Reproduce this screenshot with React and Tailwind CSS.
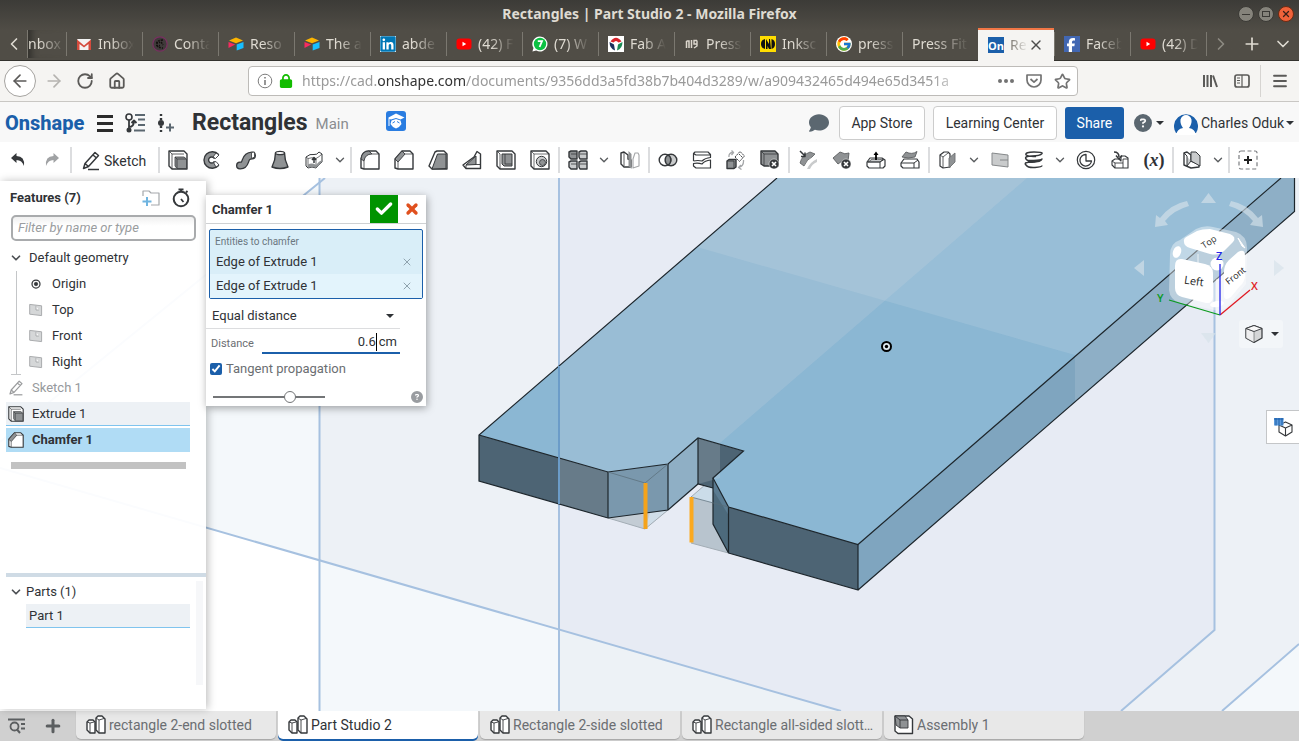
import { useState } from 'react';
import { ArrowLeft, ArrowRight, RotateCw, House, Check, X, Plus, ChevronDown, ChevronLeft, ChevronRight, Star, Menu } from 'lucide-react';
import { FcGoogle } from 'react-icons/fc';
import { FaLock, FaCircleQuestion, FaComment, FaLinkedin, FaFacebookF } from 'react-icons/fa6';

const DARK = '#35383b';

function Icon({ children, className = 'size-5' }) {
  return (
    <svg viewBox="0 0 20 20" className={className} fill="none" stroke={DARK} strokeWidth="1.4" strokeLinejoin="round" aria-hidden="true">
      {children}
    </svg>
  );
}

function Caret({ className = '' }) {
  return (
    <svg viewBox="0 0 8 4" className={`h-1 w-2 shrink-0 ${className}`} aria-hidden="true">
      <path d="M0 0H8L4 4Z" fill="#2f3236" />
    </svg>
  );
}

/* ---------- favicons ---------- */

const YoutubeFav = () => (
  <svg viewBox="0 0 16 16" className="size-4">
    <rect x="0.5" y="2.5" width="15" height="11" rx="3" fill="#f00" />
    <path d="M6.5 5.8V10.2L10.2 8Z" fill="#fff" />
  </svg>
);

const GmailFav = () => (
  <svg viewBox="0 0 16 16" className="size-4">
    <rect x="1" y="3" width="14" height="11" rx="1" fill="#f3f3f3" />
    <path d="M1 14V3.5L8 9.5L15 3.5V14H12.5V8L8 11.5L3.5 8V14Z" fill="#d54b3d" />
  </svg>
);

const SwirlFav = () => (
  <svg viewBox="0 0 16 16" className="size-4">
    <circle cx="8" cy="8" r="7.2" fill="#3f3a3a" stroke="#7a2f62" strokeWidth="1.2" />
    <path d="M11 4Q5 4 5 8T11 12M4 6.5H8M4 9.5H8M9 6L11 9" fill="none" stroke="#15110f" strokeWidth="1.6" strokeDasharray="2 1" />
  </svg>
);

const AirtableFav = () => (
  <svg viewBox="0 0 16 16" className="size-4">
    <path d="M1 4.5L8 1.5L15 4.5L8 7.2Z" fill="#fcb400" />
    <path d="M8.7 8.4L15.5 6V12L8.7 14.5Z" fill="#18bfff" />
    <path d="M0.5 6L7.2 8.6L0.5 12Z" fill="#f82b60" />
  </svg>
);

const WhatsappFav = () => (
  <svg viewBox="0 0 16 16" className="size-4">
    <path d="M8 0.5A7.5 7.5 0 1 1 4.2 14.5L0.4 15.6L1.5 12A7.5 7.5 0 0 1 8 0.5Z" fill="#fff" />
    <circle cx="8" cy="8" r="6.2" fill="#0cc143" />
    <path d="M5.8 5.2H10L7.6 11" fill="none" stroke="#fff" strokeWidth="1.8" />
  </svg>
);

const FabFav = () => (
  <svg viewBox="0 0 16 16" className="size-4">
    <rect width="16" height="16" fill="#fff" />
    <path d="M2.500 5.500Q8 -2 13.500 5.500L10.500 6.500Q8 3.500 5.500 6.500Z" fill="#d8232a" />
    <path d="M1.500 6L6 8.500L7 14.500Q1.500 12.500 1.500 6Z" fill="#1c2f5c" />
    <path d="M14.500 6L10 8.500L9 14.500Q14.500 12.500 14.500 6Z" fill="#1b8a55" />
    <circle cx="8" cy="3.500" r="1.500" fill="#d8232a" />
  </svg>
);

const PressFav = () => (
  <svg viewBox="0 0 16 16" className="size-4">
    <path d="M2.500 12V5M5 12V5H2.500M7.500 4V12" fill="none" stroke="#ddd8cf" strokeWidth="1.5" />
    <path d="M13 4.500H10V8H13V4.500V10L10 12" fill="none" stroke="#ddd8cf" strokeWidth="1.4" />
  </svg>
);

const MakerFav = () => (
  <svg viewBox="0 0 16 16" className="size-4">
    <rect width="16" height="16" fill="#fd0" />
    <path d="M5 3V13Q1 12 1 8T5 3Z" fill="#111" />
    <path d="M6 3L9 8V3H10L11 13H9L7.500 10V13H6Z" fill="#111" />
    <path d="M11.500 3Q15 4 15 8T11.500 13Z" fill="#111" />
  </svg>
);

const OnFav = () => (
  <span className="flex size-4 items-end justify-center bg-[#1b5faa] font-['Open_Sans',sans-serif] text-[11px] leading-[14px] font-bold text-white">On</span>
);

const LinkedinFav = () => (
  <span className="flex size-4 items-center justify-center bg-white"><FaLinkedin className="size-4 scale-110 text-[#0177b5]" /></span>
);

const FacebookFav = () => (
  <span className="flex size-4 items-end justify-end bg-[#4267b2] pr-0.5"><FaFacebookF className="size-3.5 text-white" /></span>
);

const browserTabs = [
  { label: 'Inbox', icon: <GmailFav /> },
  { label: 'Conta', icon: <SwirlFav /> },
  { label: 'Reso', icon: <AirtableFav /> },
  { label: 'The a', icon: <AirtableFav /> },
  { label: 'abde', icon: <LinkedinFav /> },
  { label: '(42) F', icon: <YoutubeFav /> },
  { label: '(7) W', icon: <WhatsappFav /> },
  { label: 'Fab A', icon: <FabFav /> },
  { label: 'Press', icon: <PressFav /> },
  { label: 'Inksc', icon: <MakerFav /> },
  { label: 'press', icon: <FcGoogle className="size-4 rounded-full bg-white" /> },
  { label: 'Press Fit' },
  { label: 'Re', icon: <OnFav />, active: true },
  { label: 'Faceb', icon: <FacebookFav /> },
  { label: '(42) D', icon: <YoutubeFav /> },
];

function BrowserTab({ tab }) {
  if (tab.active) {
    return (
      <button role="tab" aria-selected="true" className="flex h-[33px] w-[76px] shrink-0 items-center border-t-2 border-[#f07746] bg-[#f5f4f2] pl-[10px]">
        {tab.icon}
        <span className="ml-1.5 w-[18px] overflow-hidden text-left text-[#77736c] [mask-image:linear-gradient(to_right,#000,transparent)]">{tab.label}</span>
        <X className="size-4 text-[#4d4d4d]" />
      </button>
    );
  }
  return (
    <button role="tab" aria-selected="false" className="flex h-6 w-[76px] shrink-0 items-center gap-1.5 border-l border-[#7b7870] pr-2 pl-[9px]">
      {tab.icon}
      <span className="flex-1 overflow-hidden text-left whitespace-nowrap [mask-image:linear-gradient(to_right,#000_35%,transparent)]">{tab.label}</span>
    </button>
  );
}

function BrowserChrome() {
  return (
    <header className="font-['Noto_Sans',sans-serif] text-sm">
      <div className="bg-gradient-to-b from-[#3c3b37] to-[#504d46] to-50% text-[#dfdbd2]">
        <div className="flex h-7 items-center">
          <div className="w-16" />
          <h1 className="flex-1 text-center font-bold">Rectangles | Part Studio 2 - Mozilla Firefox</h1>
          <div className="flex w-16 justify-end gap-1 pr-[5px]">
            <button aria-label="Minimize" className="flex size-4 items-center justify-center rounded-full border border-[#3a3935] bg-[#85837b]">
              <span className="h-px w-2 bg-[#3a3935]" />
            </button>
            <button aria-label="Maximize" className="flex size-4 items-center justify-center rounded-full border border-[#3a3935] bg-[#85837b]">
              <span className="h-1.5 w-2 border border-[#3a3935]" />
            </button>
            <button aria-label="Close window" className="flex size-4 items-center justify-center rounded-full border border-[#6b2a12] bg-[#f0623a]">
              <X className="size-2.5 text-[#3a2019]" strokeWidth={3} />
            </button>
          </div>
        </div>
        <div role="tablist" className="flex h-[33px] items-center border-b border-[#33322e]">
          <button aria-label="Scroll tabs left" className="flex w-[27px] shrink-0 justify-center"><ChevronLeft className="size-5" /></button>
          <button role="tab" aria-selected="false" className="h-7 w-[39px] shrink-0 overflow-hidden border-l border-[#7b7870] text-left shadow-[inset_8px_0_6px_-4px_#33322e] [mask-image:linear-gradient(to_right,#000_30%,transparent)]">
            nbox
          </button>
          {browserTabs.map((tab, i) => <BrowserTab key={i} tab={tab} />)}
          <span className="h-6 w-px bg-[#7b7870]" />
          <div className="flex flex-1 items-center justify-between pr-1.5 pl-1">
            <button aria-label="Scroll tabs right"><ChevronRight className="size-5 text-[#8d8a82]" /></button>
            <button aria-label="New tab"><Plus className="size-5" /></button>
            <button aria-label="List all tabs"><ChevronDown className="size-5" /></button>
          </div>
        </div>
      </div>

      {/* Navigation bar */}
      <div className="flex h-[41px] items-center border-b border-[#c9c7c4] bg-[#f5f4f2] text-[#5b5a58]">
        <div className="flex w-[248px] shrink-0 items-center gap-3 pl-1">
          <button aria-label="Back" className="flex size-8 items-center justify-center rounded-full border border-[#a5a3a0] bg-white"><ArrowLeft className="size-5" /></button>
          <button aria-label="Forward" className="-ml-1"><ArrowRight className="size-5 text-[#b5b3b0]" /></button>
          <button aria-label="Reload"><RotateCw className="size-[18px]" strokeWidth={2.4} /></button>
          <button aria-label="Home" className="ml-0.5"><House className="size-[18px]" strokeWidth={2.4} /></button>
        </div>
        <div className="flex h-[30px] min-w-0 flex-1 items-center rounded border border-[#bdbbb8] bg-white pr-1.5 pl-2">
          <svg viewBox="0 0 16 16" className="size-4 shrink-0" fill="none" stroke="#7d7d7d"><circle cx="8" cy="8" r="6.8" /><path d="M8 7V12M8 4V5.6" strokeWidth="1.6" /></svg>
          <FaLock className="mx-1.5 size-3.5 shrink-0 text-[#12bc00]" />
          <div role="textbox" aria-label="Address" className="mr-8 ml-[3px] flex-1 overflow-hidden whitespace-nowrap text-[#9a9a9a] [mask-image:linear-gradient(to_right,#000_95%,transparent)]">
            https://cad.<span className="text-[#333]">onshape.com</span>/documents/9356dd3a5fd38b7b404d3289/w/a909432465d494e65d3451a
          </div>
          <button aria-label="Page actions" className="flex gap-0.5">
            <span className="size-1 rounded-full bg-[#737373]" />
            <span className="size-1 rounded-full bg-[#737373]" />
            <span className="size-1 rounded-full bg-[#737373]" />
          </button>
          <button aria-label="Save to Pocket" className="ml-3">
            <svg viewBox="0 0 16 16" className="size-4" fill="none" stroke="#737373" strokeWidth="1.7" strokeLinejoin="round"><path d="M1 2H15V7A7 7 0 0 1 1 7ZM4.5 6L8 9.2L11.5 6" /></svg>
          </button>
          <button aria-label="Bookmark" className="ml-3"><Star className="size-[17px] text-[#737373]" strokeWidth={2.4} /></button>
        </div>
        <div className="flex w-[221px] shrink-0 items-center justify-end pr-2.5">
          <button aria-label="Library">
            <svg viewBox="0 0 16 16" className="size-4" stroke="#5b5a58" strokeWidth="2"><path d="M2 2V14M5.5 2V14M9 2V14M11 2.5L15 14" /></svg>
          </button>
          <button aria-label="Sidebars" className="ml-4">
            <svg viewBox="0 0 16 16" className="size-4" fill="none" stroke="#5b5a58" strokeWidth="1.7"><rect x="1" y="2" width="14" height="12" rx="2" /><path d="M8 2V14M3 5H6M3 7.5H6M3 10H6" strokeWidth="1.2" /></svg>
          </button>
          <span className="mx-2.5 h-8 w-px bg-[#d6d4d1]" />
          <button aria-label="Open menu"><Menu className="size-[18px]" strokeWidth={2.4} /></button>
        </div>
      </div>
    </header>
  );
}

function AppHeader() {
  return (
    <div className="flex h-10 items-center bg-[#f8f8f8] px-[5px] pt-0.5 text-sm text-[#2f3236]">
      <a href="#home" className="w-[79px] text-xl leading-8 font-extrabold text-[#1b5faa]">Onshape</a>
      <button aria-label="Document menu" className="ml-[13px] flex w-4 flex-col gap-1">
        <span className="h-[3px] bg-[#2b2b2b]" />
        <span className="h-[3px] bg-[#2b2b2b]" />
        <span className="h-[3px] bg-[#2b2b2b]" />
      </button>
      <button aria-label="Versions and history" className="ml-3">
        <Icon>
          <circle cx="4" cy="4" r="3" strokeWidth="1.6" />
          <path d="M4 7V18M4 14Q9 14 9 8M6.5 10L9 7.5L11.5 10" strokeWidth="1.8" />
          <circle cx="4" cy="17" r="1.8" fill={DARK} />
          <path d="M10 2H20M13 6.5H20M13 12H20M9 17.5H20" stroke="#5b6770" strokeWidth="1.8" />
        </Icon>
      </button>
      <button aria-label="Create version" className="ml-3">
        <Icon>
          <path d="M4 1V19" strokeWidth="2.4" strokeDasharray="2 2" />
          <circle cx="4" cy="10" r="3" fill={DARK} stroke="none" />
          <path d="M13 10.5V18.5M9 14.5H17" stroke="#5b6770" strokeWidth="2" />
        </Icon>
      </button>
      <h2 className="ml-[15px] text-[23px] leading-8 font-bold">Rectangles</h2>
      <span className="mt-1 ml-2 text-[15px] text-[#8a8d90]">Main</span>
      <button aria-label="Education plan" className="-mt-1 ml-[37px] flex size-5 items-center justify-center rounded-[3px] bg-[#2a7de1]">
        <svg viewBox="0 0 20 20" className="size-5" fill="#fff"><path d="M10 2.5L18.500 6.500L14.500 8.500L10 7L5 8.500L3.500 8V15H2.500V6.500Z" /><path d="M5.500 9.500L10 8L14.500 9.500L15.500 13L13 16L10 17.500L7 16L4.500 13Z" /><path d="M6.500 12L9 10.500M13.500 12L11 10.500" stroke="#2a7de1" /></svg>
      </button>
      <div className="ml-auto flex items-center">
        <button aria-label="Comments"><FaComment className="size-5 text-[#5b6770]" /></button>
        <button className="ml-2.5 h-[34px] w-[86px] rounded border border-[#ccc] bg-white">App Store</button>
        <button className="ml-2 h-[34px] w-[124px] rounded border border-[#ccc] bg-white">Learning Center</button>
        <button className="ml-2 h-8 w-[59px] rounded-[3px] bg-[#1b5faa] text-white">Share</button>
        <button aria-label="Help" className="ml-2.5 flex items-center gap-1"><FaCircleQuestion className="size-[18px] text-[#5b6770]" /><Caret /></button>
        <button className="ml-2.5 flex items-center">
          <svg viewBox="0 0 24 24" className="size-6">
            <path d="M2 22A12 12 0 1 1 22 22Z" fill="#1b5faa" />
            <path d="M2 24Q3 18 9 17Q6 13 6.5 8.5Q8 4 12 4T17.500 8.500Q18 13 15 17Q21 18 22 24Z" fill="#fff" />
          </svg>
          <span className="mr-0.5 ml-[3px]">Charles Oduk</span>
          <Caret />
        </button>
      </div>
    </div>
  );
}

/* ---------- toolbar icons ---------- */

const G = '#8f9294';
const L = '#c9cbcc';

const icons = {
  extrude: <><path d="M1 1H16L19 4V19H4L1 16Z" fill="#fff" /><path d="M1 1L4 4V19M4 4H16" strokeWidth="0.8" /><path d="M7 7H16L18.500 9V18.500H9L7 16Z" fill={G} strokeWidth="0.8" /><path d="M7 7L9 9V18M9 9H18" strokeWidth="0.8" /></>,
  revolve: <><path d="M16.500 4.500A8.300 8.300 0 1 0 16.500 15.500L12 11.800A3 3 0 1 1 12 8.200Z" fill={G} /><path d="M14 3L17 5L13.500 8.500L11 7ZM11.500 12.500L14 11.500L17 15L14 17Z" fill="#fff" strokeWidth="0.9" /></>,
  sweep: <><path d="M4 15.500C12 16 6.500 6 16 5.500" strokeWidth="8" strokeLinecap="round" /><path d="M4 15.500C12 16 6.500 6 16 5.500" stroke={G} strokeWidth="5.4" strokeLinecap="round" /><path d="M15.500 2.500L18.500 2V7L15.500 8.500Z" fill="#fff" strokeWidth="0.8" /></>,
  loft: <><path d="M5.500 3C5.500 9 3.500 14 2 17Q10 20 18 17C16.500 14 14.500 9 14.500 3Z" fill={G} /><ellipse cx="10" cy="3" rx="4.500" ry="1.600" fill="#fff" /></>,
  thicken: <><path d="M2 7Q6 3.500 10 4.500Q13 5 15 2L18 4V12Q15 14 12 18Q8 16 4 18L2 16Z" fill="#fff" strokeWidth="1" /><path d="M2 7L4 8.500V18M4 8.500Q8 7 12 8.500Q15 7 18 4M12 8.500V18" strokeWidth="0.700" /><path d="M4 14.500Q8 12.500 12 15Q15 11 18 10V12Q15 14 12 18Q8 16 4 18Z" fill={G} stroke="none" /><path d="M10 13V9M8 10L10 7.500L12 10" strokeWidth="1.500" /></>,
  fillet: <><path d="M1 18V9Q2 1 9 1H16L19 4V19H4Z" fill="#fff" /><path d="M1 9Q2 1 9 1L12 4Q5 4 4 11Z" fill={G} strokeWidth="0.900" /><path d="M4 19V11M12 4H19" strokeWidth="0.800" /></>,
  chamfer: <><path d="M1 18V9L8 1H16L19 4V19H4Z" fill="#fff" /><path d="M1 9L8 1L11 4L4 12Z" fill={G} strokeWidth="0.900" /><path d="M4 19V12M11 4H19" strokeWidth="0.800" /></>,
  draft: <><path d="M1 16L7 2L9 1H16L19 4V19H4Z" fill="#fff" /><path d="M4 19L9.500 4H18V18.500Z" fill={G} strokeWidth="1" /></>,
  rib: <><path d="M1 15L12 7L15 1.500L18.500 4V18.500H4Z" fill="#fff" /><path d="M4 15L14 6V14.500Z" fill={G} strokeWidth="1" /><path d="M4 15V18M14 14.500H18" strokeWidth="0.900" /></>,
  shell: <><path d="M1 1H16L19 4V19H4L1 16Z" fill="#fff" /><path d="M6 4H16V16H8L6 14Z" fill={G} strokeWidth="1" /><path d="M9 4V14H16M1 1L4 4V19" strokeWidth="0.800" /></>,
  hole: <><path d="M1 1H16L19 4V19H4L1 16Z" fill="#fff" /><path d="M1 1L4 4V19M4 4H19" strokeWidth="0.700" /><circle cx="11.500" cy="11.500" r="5.200" fill={L} strokeWidth="1" /><circle cx="12.500" cy="12.500" r="3" fill={G} strokeWidth="0.800" /></>,
  pattern: <><path d="M1 2L3 1H9V9H3L1 7Z" fill={G} /><path d="M11 2L13 1H18L19 2V9H12L11 7Z" fill={L} /><path d="M1 12L3 11H9V19H3L1 17ZM11 12L13 11H19V19H12L11 17Z" fill={L} /><path d="M3 4H9M12 4H19M3 14H9M12 14H19" strokeWidth="0.800" /></>,
  mirror: <><path d="M1 3L4 2L8 5V9L11 10V17H4L1 14Z" fill="#fff" /><path d="M4 2V16" strokeWidth="0.800" /><path d="M8.500 1L11.500 4V19L8.500 16Z" fill={G} stroke="none" /><path d="M13 9L15 3H18L19 5V16L13 18Z" fill="#fff" stroke="#a5a7a9" strokeWidth="1.100" /></>,
  boolean: <><circle cx="13" cy="10" r="5.800" fill={L} /><circle cx="7" cy="10" r="5.800" fill="#fff" /><path d="M10 5A5.800 5.800 0 0 1 10 15A5.800 5.800 0 0 1 10 5Z" fill={G} /></>,
  split: <><path d="M1 3.500L3 2H16L19 4.500V18H4L1 16Z" fill="#fff" stroke="none" /><path d="M1.500 11V3.500L3 2H16L18.500 4.500V7.500Q13 8 10 11Q6 10 1.500 11M1.500 3.500L4 5H18.500" strokeWidth="1.200" /><path d="M1.500 13.500Q6 12.500 10 14Q13 10.500 18.500 10V18H4L1.500 16Z" strokeWidth="1.200" /></>,
  transform: <><path d="M1 11L3 9.500H10V17L8 18.500H1Z" fill={G} /><path d="M1 11H8V18" strokeWidth="0.900" /><path d="M9 7L14 1.500L18.500 6L13.500 11.500ZM13 4L17 8" fill="#fff" strokeWidth="0.900" strokeDasharray="2 0.600" /><path d="M3 7Q2.500 3 6.500 2.500M5.500 0.500L7.500 2.500L5.500 5M17.500 10Q18 16 13 17.500M15 15L12.500 17.500L15.500 19.500" stroke="#a5a7a9" strokeWidth="1.300" /></>,
  deletePart: <><path d="M1 1H15L18 4V16H4L1 14Z" fill={G} /><path d="M1 1L4 4V16M4 4H18" strokeWidth="0.800" /><circle cx="14" cy="14" r="5" fill={DARK} stroke="#fff" strokeWidth="0.500" /><path d="M12 12L16 16M16 12L12 16" stroke="#fff" strokeWidth="1.600" /></>,
  modifyFillet: <><path d="M2 13Q4 5 12 2L17 4L14 7Q9 9 6 16Z" fill={G} stroke="#5b5e60" strokeWidth="0.800" /><path d="M9 19Q12 12 19 9L19 12Q14 14 12 19Z" fill={L} stroke="none" /><path d="M2 1L7 6M7 2.500V6.500H3" strokeWidth="1.500" /></>,
  deleteFace: <><path d="M1 8L8 2Q13 5 17 3L16 11Q12 9 6 14Z" fill={G} stroke="#5b5e60" strokeWidth="0.900" /><circle cx="14" cy="14" r="5" fill={DARK} stroke="#fff" strokeWidth="0.500" /><path d="M12 12L16 16M16 12L12 16" stroke="#fff" strokeWidth="1.600" /></>,
  moveFace: <><path d="M1 12L4 8H16L19 10V16L17 18H3L1 16Z" fill="#fff" strokeWidth="1.200" /><path d="M2 12Q6 8 10 9T17 9L14 12Z" fill={L} strokeWidth="0.700" /><path d="M1 12H14V18M14 12L18 9.500" strokeWidth="1" /><path d="M10 10V4" stroke="#000" strokeWidth="1.800" /><path d="M7.500 5L10 1.500L12.500 5Z" fill="#000" stroke="none" /></>,
  replaceFace: <><path d="M2 7L6 2Q12 5 17 1.500L15 7Q8 9 2 7Z" fill={G} stroke="#5b5e60" strokeWidth="0.900" /><path d="M1 13L4 9H17L19 12V18H3L1 16Z" fill="#fff" strokeWidth="1.200" /><path d="M1 13H14V18M14 13L18 10" strokeWidth="1" /></>,
  offset: <><path d="M2 5L6 2H10L12 4V17L5 18L2 16Z" fill="#fff" strokeWidth="1.200" /><path d="M2 5L5 7V18M5 7L10 3" strokeWidth="0.800" /><path d="M11 8L17 3V12L11 18Z" fill={G} stroke="#6d7072" strokeWidth="0.900" /></>,
  plane: <path d="M2 3L18 5V17L2 15ZM10 10H18" fill={L} stroke="#85888a" strokeWidth="1" />,
  helix: <path d="M2 5Q1 2 10 2T18 3.500Q16 6 8 6T2 9Q3 11 10 10.500T18 9Q17 12 8 12T2 15Q4 18 11 17.500T18 15.500M2 5Q5 7 12 6.500M2 9Q5 13 12 12" strokeWidth="1.500" />,
  curve: <><circle cx="10" cy="10" r="8.700" strokeWidth="1.200" /><path d="M10 4.500A5.800 5.800 0 1 0 15.500 11H10Z" strokeWidth="1.300" /></>,
  derived: <><path d="M2 11L5 9H9L11 11V6H15L18 8V18H5L2 15Z" fill="#fff" strokeWidth="1.100" /><path d="M2 11L5 13H13V9H18M13 13V18M5 13V18" strokeWidth="0.900" /><path d="M4 2Q9 2 9 7M6 5.500L9 9L12 5.500" strokeWidth="1.500" /></>,
  frame: <><path d="M2 3L5 2L9 5V11L17 14V17L9 18L2 15Z" fill="#fff" /><path d="M9 5V2H14L18 6V16L9 11ZM2 3L5 6V16L9 11" fill={L} strokeWidth="1" /></>,
  addTool: <><rect x="1" y="1" width="18" height="18" rx="2" stroke="#7b7d80" strokeWidth="1.200" strokeDasharray="4 2.500" /><path d="M10 6V14M6 10H14" stroke="#222" strokeWidth="2" /></>,
  part: <><path d="M1 7L3 5H7L9 7V18H4L1 15Z" fill="#fff" /><path d="M1 7L4 8V18M4 8L8 7" strokeWidth="0.900" /><path d="M10 3L12 1H16L19 4V18H13L10 15Z" fill="#fff" /><path d="M10 3L13 5V18M13 5L18 3.500" strokeWidth="0.900" /></>,
  assembly: <><path d="M1 1H15L18.500 4V18.500H4L1 16Z" fill="#fff" /><path d="M1 1H11L14 5V13H6L2 10Z" fill={G} strokeWidth="0.900" /><path d="M1 1L6 5V13M6 5H14" strokeWidth="0.900" /></>,
  sketch: <><path d="M2.500 17.500L4 12.500L14 1.500L17.500 4.500L7.500 15.500ZM4 12.500L7.500 15.500M12 4L15.500 7" strokeWidth="1.500" /><path d="M7 18.500H18" strokeWidth="1.500" /></>,
  planeSmall: <path d="M1 2L18 4V18L1 16ZM10 4V10H14" fill="#d5d7d8" stroke="#a8aaac" />,
};

// '|' is a group divider, 'v' is a flyout arrow
const tools = [
  ['extrude', 'Extrude'], ['revolve', 'Revolve'], ['sweep', 'Sweep'], ['loft', 'Loft'], ['thicken', 'Thicken'], 'v', '|',
  ['fillet', 'Fillet'], ['chamfer', 'Chamfer'], ['draft', 'Draft'], ['rib', 'Rib'], ['shell', 'Shell'], ['hole', 'Hole'], '|',
  ['pattern', 'Linear pattern'], 'v', ['mirror', 'Mirror'], '|',
  ['boolean', 'Boolean'], ['split', 'Split'], ['transform', 'Transform'], ['deletePart', 'Delete part'], '|',
  ['modifyFillet', 'Modify fillet'], ['deleteFace', 'Delete face'], ['moveFace', 'Move face'], ['replaceFace', 'Replace face'], '|',
  ['offset', 'Offset surface'], 'v', ['plane', 'Plane'], ['helix', 'Helix'], 'v', ['curve', 'Composite curve'], ['derived', 'Derived'], ['variable', 'Variable'], '|',
  ['frame', 'Sheet metal'], 'v', '|',
  ['addTool', 'Add custom features'],
];

const Divider = () => <span className="mx-px h-[26px] w-0.5 shrink-0 bg-[#dcdddf]" />;

function Toolbar() {
  return (
    <div className="flex h-9 items-center bg-white text-sm text-[#2f3236]">
      <button aria-label="Undo" className="flex w-[35px] shrink-0 justify-center">
        <svg viewBox="0 0 16 16" className="size-4"><path d="M1 6L6.500 1V4Q15 4 14 14Q12 8 6.500 8V11Z" fill="#35383b" /></svg>
      </button>
      <button aria-label="Redo" className="flex w-[34px] shrink-0 justify-center">
        <svg viewBox="0 0 16 16" className="size-4"><path d="M15 6L9.500 1V4Q1 4 2 14Q4 8 9.500 8V11Z" fill="#a0a2a4" /></svg>
      </button>
      <Divider />
      <button className="flex w-[84px] shrink-0 items-center gap-[3px] pt-0.5 pl-2"><Icon>{icons.sketch}</Icon>Sketch</button>
      <Divider />
      {tools.map((tool, i) => {
        if (tool === '|') return <Divider key={i} />;
        if (tool === 'v') {
          return <button key={i} aria-label="More tools" className="flex w-[18px] shrink-0 justify-center"><ChevronDown className="size-3.5 text-[#5b5e60]" strokeWidth={2.4} /></button>;
        }
        const [id, label] = tool;
        return (
          <button key={i} aria-label={label} className="flex w-[34px] shrink-0 justify-center">
            {id === 'variable'
              ? <span className="font-['Liberation_Serif',serif] text-lg leading-5 font-bold">(<i>x</i>)</span>
              : <Icon>{icons[id]}</Icon>}
          </button>
        );
      })}
    </div>
  );
}

/* ---------- left panel ---------- */

function FeatureRow({ icon, children, className = '' }) {
  return (
    <li className={`flex h-6 items-center ${className}`}>
      <span className="mr-2 flex w-4 shrink-0 justify-center">{icon}</span>
      {children}
    </li>
  );
}

function FeaturePanel() {
  return (
    <aside className="relative mt-[3px] mb-0.5 flex w-[206px] shrink-0 flex-col bg-white/95 text-[13px] text-[#2f3236] shadow-[2px_0_8px_rgba(0,0,0,0.25)]">
      <div className="flex-1">
        <div className="flex h-[34px] items-center pr-[15px] pl-2.5">
          <h3 className="font-bold">Features (7)</h3>
          <button aria-label="Add folder" className="ml-auto">
            <Icon>
              <path d="M2 8V3H8L10 5H18V17H10" stroke="#a5a8ab" strokeWidth="1.2" />
              <path d="M6 9V18M1.500 13.500H10.500" stroke="#6fb4e0" strokeWidth="2" />
            </Icon>
          </button>
          <button aria-label="Regeneration times" className="ml-2.5">
            <Icon>
              <circle cx="10" cy="11" r="7.300" strokeWidth="2" />
              <path d="M7.500 1.500H12.500M10 1.500V4M10 11L12.500 14M15 4.500L16.500 3" strokeWidth="1.800" />
            </Icon>
          </button>
        </div>
        <div className="pr-2.5 pl-[11px]">
          <input aria-label="Filter features" placeholder="Filter by name or type" className="h-[26px] w-full rounded-[5px] border-2 border-[#a9abad] bg-gradient-to-b from-[#f0f0f0] to-white to-40% px-[5px] pb-0.5 placeholder:text-[#9a9da0] placeholder:italic" />
        </div>
        <button className="mt-1 flex h-[26px] items-center gap-1.5 pl-[9px]">
          <ChevronDown className="size-3.5 text-[#4d5054]" strokeWidth={3} />Default geometry
        </button>
        <ul className="ml-4 flex flex-col gap-0.5 border-l border-[#c4c6c8] py-px pl-3.5">
          <FeatureRow className="-ml-[3px]" icon={<Icon className="size-2.5"><circle cx="10" cy="10" r="8" strokeWidth="2.500" /><circle cx="10" cy="10" r="3.500" fill={DARK} /></Icon>}>Origin</FeatureRow>
          <FeatureRow className="-ml-[3px]" icon={<Icon className="size-3.5">{icons.planeSmall}</Icon>}>Top</FeatureRow>
          <FeatureRow className="-ml-[3px]" icon={<Icon className="size-3.5">{icons.planeSmall}</Icon>}>Front</FeatureRow>
          <FeatureRow className="-ml-[3px]" icon={<Icon className="size-3.5">{icons.planeSmall}</Icon>}>Right</FeatureRow>
        </ul>
        <div className="-mt-px ml-[11px] h-px w-2.5 bg-[#c4c6c8]" />
        <ul className="flex flex-col gap-0.5 pt-px pr-4 pl-1.5">
          <FeatureRow className="pl-0.5 text-[#96999c]" icon={<Icon className="size-4 opacity-50">{icons.sketch}</Icon>}>Sketch 1</FeatureRow>
          <FeatureRow className="border-b border-[#7fc4ee] bg-[#edf1f5] pl-0.5" icon={<Icon className="size-4">{icons.extrude}</Icon>}>Extrude 1</FeatureRow>
          <FeatureRow className="bg-[#b0dcf5] pl-0.5 font-bold" icon={<Icon className="size-4">{icons.chamfer}</Icon>}>Chamfer 1</FeatureRow>
        </ul>
        <div className="mt-2.5 mr-5 ml-[11px] h-[7px] bg-[#c2c2c2]" />
      </div>
      <div className="ml-1.5 h-1 bg-[#cfdbe5]" />
      <div className="flex h-[132px]">
        <div className="flex-1 pt-[3px]">
          <button className="flex h-6 items-center gap-[3px] pl-[9px]">
            <ChevronDown className="size-3.5 text-[#4d5054]" strokeWidth={3} />Parts (1)
          </button>
          <div className="mr-1.5 ml-[26px] flex h-6 items-center border-b border-[#7fc4ee] bg-[#edf1f5] pl-[3px]">Part 1</div>
        </div>
        <div className="mt-1 mr-[3px] mb-6 w-[7px] bg-[#f6f7f9]" />
      </div>
    </aside>
  );
}

/* ---------- chamfer dialog ---------- */

function ChamferDialog() {
  const [edges, setEdges] = useState(['Edge of Extrude 1', 'Edge of Extrude 1']);
  const [tangent, setTangent] = useState(true);
  const [opacity, setOpacity] = useState(71);

  return (
    <section aria-label="Chamfer 1" className="relative mt-[17px] flex h-[211px] w-[220px] shrink-0 flex-col self-start bg-white text-[13px] text-[#2f3236] shadow-[1px_2px_8px_rgba(0,0,0,0.35)]">
      <div className="flex h-[29px] items-center border-b border-[#cfd1d3] pl-1.5">
        <h3 className="flex-1 pt-0.5 font-bold">Chamfer 1</h3>
        <button aria-label="Accept" className="flex size-7 items-center justify-center bg-[#009300]"><Check className="size-5 text-white" strokeWidth={4} /></button>
        <button aria-label="Cancel" className="flex size-7 items-center justify-center"><X className="size-4 text-[#e0501e]" strokeWidth={5} /></button>
      </div>
      <div className="mx-[3px] mt-[5px] rounded-xs border border-[#1b5faa] bg-[#d9eef8]">
        <div className="h-5 pl-[5px] text-[10px] leading-[23px] text-[#6b7780]">Entities to chamfer</div>
        <ul>
          {edges.map((edge, i) => (
            <li key={i} className="flex h-6 items-center pr-[9px] pl-1.5 even:bg-[#e3f4fc]">
              <span className="flex-1">{edge}</span>
              <button aria-label="Remove" onClick={() => setEdges(edges.filter((_, n) => n !== i))}><X className="size-3 text-[#8fa3ae]" /></button>
            </li>
          ))}
        </ul>
      </div>
      <div className="mt-1 mr-[26px] grid h-[26px] items-center border-b border-[#dcdddf]">
        <select aria-label="Chamfer type" className="col-start-1 row-start-1 w-full appearance-none pl-1.5">
          <option>Equal distance</option>
        </select>
        <Caret className="pointer-events-none col-start-1 row-start-1 mr-1.5 justify-self-end" />
      </div>
      <div className="mr-[26px] flex h-[25px] items-end gap-1 pl-[5px]">
        <label htmlFor="distance" className="w-[47px] text-[11px] leading-5 text-[#6b6e72]">Distance</label>
        <div className="flex h-[22px] min-w-0 flex-1 items-center border-b-2 border-[#1b5faa] pr-[3px]">
          <input id="distance" defaultValue="0.6" className="min-w-0 flex-1 text-right outline-none" />
          <span className="mr-0.5 h-[18px] w-px bg-black" />
          <span>cm</span>
        </div>
      </div>
      <label className="mt-[3px] flex h-6 items-center gap-1 pl-1 text-[#6b6e72]">
        <input type="checkbox" checked={tangent} onChange={(e) => setTangent(e.target.checked)} className="size-3 accent-[#1b5faa]" />
        Tangent propagation
      </label>
      <div className="mt-auto flex h-[18px] items-center justify-between pr-[3px] pl-[7px]">
        <input
          type="range"
          aria-label="Preview opacity"
          value={opacity}
          onChange={(e) => setOpacity(Number(e.target.value))}
          className="h-0.5 w-28 appearance-none bg-[#737577] [&::-webkit-slider-thumb]:size-3 [&::-webkit-slider-thumb]:appearance-none [&::-webkit-slider-thumb]:rounded-full [&::-webkit-slider-thumb]:border [&::-webkit-slider-thumb]:border-[#737577] [&::-webkit-slider-thumb]:bg-white"
        />
        <button aria-label="Chamfer help"><FaCircleQuestion className="size-3 text-[#999ca0]" /></button>
      </div>
    </section>
  );
}

/* ---------- 3D view ---------- */

function Scene() {
  return (
    <svg viewBox="0 178 1299 533" preserveAspectRatio="xMinYMin slice" className="absolute inset-0 size-full" aria-hidden="true">
      <defs>
        <clipPath id="solid">
          <path d="M479 435L777 178H1294.500V211.500L858 590L728.500 553L713 524V488L698 484L668 510L608 518L479 481Z" />
        </clipPath>
      </defs>
      {/* reference planes */}
      <rect y="178" width="1299" height="533" fill="#fff" />
      <path d="M325 178L0 442V468L841 711H1222L1299 644V178Z" fill="#f4f8fb" />
      <path d="M319 560.500V711H841Z" fill="#f4f8fb" />
      <path d="M1299 644L1222 711H1299Z" fill="#f4f8fb" />
      <path d="M319.500 178V560.500L841 711H1222L1299 644V178Z" fill="#edf1f6" />
      <path d="M559 630V711H841Z" fill="#edf2f6" />
      <path d="M559 178V630L841 711H1121L1214.500 630V178Z" fill="#e7ebf4" />
      <g stroke="#a6c1e0" strokeWidth="2" fill="none">
        <path d="M325 178L0 442M0 468L841 711" />
        <path d="M319.500 178V711M559 178V711" />
        <path d="M1214.500 178V630L1121 711M1299 644L1222 711" />
      </g>

      {/* removed corners */}
      <path d="M608 518L645 529L668 510Z" fill="#c3ccd4" />
      <path d="M645 529L668 510L650 513Z" fill="#cfdde8" />
      <path d="M691 497L713 478V503Z" fill="#cbdce9" />
      <path d="M691 497L728.500 507V553L691 543Z" fill="#b8c4ce" />
      <path d="M691 497L713 478M691 543L728.500 553M608 518L645 529L668 510" stroke="#a3adb5" fill="none" />

      {/* body */}
      <path d="M858 544.500L1281 178H1294.500V211.500L858 590Z" fill="#7fa5bf" />
      <path d="M698 438L743.500 451L713 478V488L698 484Z" fill="#4d6474" />
      <path d="M479 435L777 178H1281L858 544.500L728.500 507L713 478L743.500 451L698 438L668 464L608 472Z" fill="#8bb7d3" />
      <path d="M479 435L608 472V518L479 481Z" fill="#4d6474" />
      <path d="M608 472L668 464V510L608 518Z" fill="#6589a0" />
      <path d="M668 464L698 438V484L668 510Z" fill="#7fa5bf" />
      <path d="M713 478L728.500 507V553L713 524Z" fill="#5a7b91" />
      <path d="M713 490L728.500 515V553L713 524Z" fill="#4d6a7c" />
      <path d="M728.500 507L858 544.500V590L728.500 553Z" fill="#4d6474" />
      <g clipPath="url(#solid)">
        <path d="M559 178H1027L720 443V478L698 484L668 511V711H559Z" fill="#d2d7e0" opacity="0.2" />
        <path d="M697 247L1075 355V401L1299 207V178H777Z" fill="#e0e7ec" opacity="0.16" />
      </g>
      <g stroke="#1d262c" strokeWidth="1.2" fill="none">
        <path d="M777 178L479 435V481L608 518L668 510L698 484L713 488" />
        <path d="M479 435L608 472L668 464L698 438L743.500 451L713 478L728.500 507L858 544.500L1281 178" />
        <path d="M608 472V518M668 464V510M698 438V484M713 478V524L728.500 553V507M728.500 553L858 590V544.500M858 590L1294.500 211.500V178" />
      </g>
      <path d="M608 472L645 483L668 464M691 497L728.500 507" stroke="#586c78" strokeOpacity="0.7" fill="none" />
      <path d="M559 366V504" stroke="#6b9cc8" strokeWidth="2" />
      <path d="M645.500 483V529" stroke="#f5a31a" strokeWidth="4" />
      <path d="M691.500 497V542.500" stroke="#fba91f" strokeWidth="4" />
      <circle cx="886.500" cy="346.500" r="4.500" fill="#dfe9ef" stroke="#000" strokeWidth="2" />
      <circle cx="886.500" cy="346.500" r="1.700" fill="#000" />
    </svg>
  );
}

function ViewCube() {
  return (
    <svg viewBox="1130 190 160 130" className="mt-3 mr-[9px] h-[130px] w-40 overflow-visible font-['Open_Sans',sans-serif]">
      <g fill="#d5e2ea" fillOpacity="0.65">
        <path d="M1201 203L1208.500 193L1216 203ZM1144 260L1134 268L1144 276ZM1274 260L1284 268L1274 276ZM1201 333H1216L1208.500 343Z" />
        <path d="M1187 201L1189 206Q1174 210 1165 221L1168 225L1155 227L1156 215L1160 218Q1171 204 1187 201ZM1231 201L1229 206Q1244 210 1253 221L1250 225L1263 227L1262 215L1258 218Q1247 204 1231 201Z" />
      </g>
      <path d="M1170 255Q1170 243 1180 240L1196 229Q1204 225 1213 227L1236 232Q1248 236 1247 250L1246 284L1228 306Q1220 313 1210 309L1180 303Q1170 300 1169 290Z" fill="#fff" fillOpacity="0.4" />
      <path d="M1198 254V263M1222 280L1216 280" stroke="#fff" strokeOpacity="0.7" />
      <g fill="#fff">
        <path d="M1184 242Q1183 238 1188 236L1197 231Q1202 229 1210 229L1230 234Q1237 237 1233 242L1224 251Q1219 256 1210 254L1190 248Q1184 246 1184 242Z" />
        <path d="M1175 266Q1175 258 1182 259L1205 264Q1213 266 1213 273V296Q1213 304 1206 303L1182 297Q1175 295 1175 288Z" />
        <path d="M1224 272Q1224 265 1229 260L1238 252Q1245 248 1245 256V275Q1245 282 1240 286L1231 297Q1224 302 1224 295Z" />
        <ellipse cx="1177" cy="252" rx="4" ry="6" transform="rotate(20 1177 252)" />
        <circle cx="1217" cy="264" r="6.500" />
        <ellipse cx="1217" cy="304" rx="7" ry="3" transform="rotate(-10 1217 304)" />
        <path d="M1238 238L1245 248L1242 246Z" stroke="#fff" />
      </g>
      <g fill="none" strokeWidth="1.300">
        <path d="M1220 315L1169 300" stroke="#0a9a1c" />
        <path d="M1220 315L1250 290" stroke="#e01b24" />
        <path d="M1220 315V264" stroke="#2222e8" />
      </g>
      <g fontSize="11" fontWeight="600">
        <text x="1157" y="302" fill="#0a9a1c">Y</text>
        <text x="1251" y="290" fill="#e01b24">X</text>
        <text x="1216" y="260" fill="#2222e8">Z</text>
      </g>
      <g fontSize="11" fill="#222" textAnchor="middle">
        <text x="1194" y="285" transform="rotate(8 1194 281)">Left</text>
        <text x="1235" y="279" fontSize="9" transform="rotate(-38 1235 275)">Front</text>
        <text x="1209" y="245" fontSize="9" transform="rotate(-34 1209 242)">Top</text>
      </g>
    </svg>
  );
}

function ViewControls() {
  return (
    <div className="relative ml-auto flex flex-col items-end">
      <ViewCube />
      <button aria-label="View options" className="mr-4 flex h-7 w-11 items-center justify-between rounded-[3px] bg-[#f3f6f9] pr-1 pl-[5px]">
        <Icon>
          <path d="M10 1.500L18 4.500V14L10 18.500L2 14V4.500Z" fill="#d5d6d7" strokeWidth="1.200" />
          <path d="M2 4.500L10 7.500V18.500L2 14Z" fill="#eeeeef" strokeWidth="0.500" />
          <path d="M10 1.500L18 4.500L10 7.500L2 4.500Z" fill="#f8f8f8" strokeWidth="0.900" />
        </Icon>
        <Caret />
      </button>
      <button aria-label="Configuration tables" className="mt-[62px] flex h-[34px] w-[33px] items-center justify-center border border-r-0 border-[#c4c6c8] bg-white">
        <Icon>
          <path d="M12.500 5L19 8V15L12.500 19L6 15V8ZM6 8L12.500 11L19 8M12.500 11V19" fill="#fff" strokeWidth="1.100" />
          <rect x="1" y="1" width="9.500" height="7.500" fill="#5e9bdb" stroke="none" />
          <path d="M1 2H10.500M3 1V8.500M6 1V8.500M9 1V8.500" stroke="#1b5faa" strokeWidth="1" />
        </Icon>
      </button>
    </div>
  );
}

/* ---------- bottom tabs ---------- */

const documentTabs = [
  { name: 'rectangle 2-end slotted', type: 'part' },
  { name: 'Part Studio 2', type: 'part', active: true },
  { name: 'Rectangle 2-side slotted', type: 'part' },
  { name: 'Rectangle all-sided slotted', type: 'part' },
  { name: 'Assembly 1', type: 'assembly' },
];

function DocumentTabs() {
  return (
    <footer className="flex h-[30px] bg-[#d0d0d0] text-sm">
      <button aria-label="Tab manager" className="ml-[7px] flex w-5 items-center">
        <Icon>
          <path d="M1 3.500H18M14 8H18M14 12.500H18" stroke="#5b5e60" strokeWidth="1.800" />
          <circle cx="7.500" cy="10.500" r="4" stroke="#5b5e60" strokeWidth="1.800" />
          <path d="M10 13.500L13 17" stroke="#5b5e60" strokeWidth="2" />
        </Icon>
      </button>
      <button aria-label="Insert new tab" className="mr-[13px] ml-4 flex w-5 items-center justify-center"><Plus className="size-5 text-[#5b5e60]" strokeWidth={3.6} /></button>
      <div role="tablist" className="flex min-w-0 gap-0.5">
        {documentTabs.map((tab) => (
          <button
            key={tab.name}
            role="tab"
            aria-selected={!!tab.active}
            className={`flex h-7 w-[200px] min-w-0 items-center gap-[3px] rounded-b-[5px] pr-2 pl-2.5 ${tab.active ? 'bg-white text-[#2f3236] shadow-[0_2px_0_#1b5faa]' : 'bg-[#e8e8e8] text-[#6b6e72] shadow-[0_1px_1px_rgba(0,0,0,0.2)]'}`}
          >
            <Icon className="size-5 shrink-0">{icons[tab.type]}</Icon>
            <span className="truncate">{tab.name}</span>
          </button>
        ))}
      </div>
    </footer>
  );
}

export default function App() {
  return (
    <div className="flex min-h-screen flex-col overflow-hidden bg-white font-['Roboto',sans-serif]">
      <BrowserChrome />
      <AppHeader />
      <Toolbar />
      <main className="relative flex flex-1">
        <Scene />
        <FeaturePanel />
        <ChamferDialog />
        <ViewControls />
      </main>
      <DocumentTabs />
    </div>
  );
}
